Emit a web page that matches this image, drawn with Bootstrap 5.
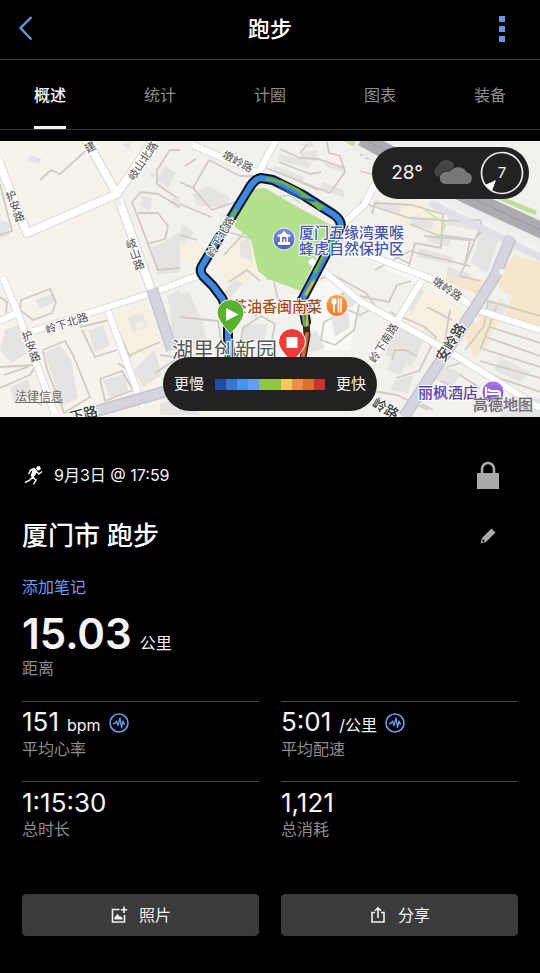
<!DOCTYPE html>
<html lang="zh-CN" data-bs-theme="dark">
<head>
<meta charset="utf-8">
<meta name="viewport" content="width=device-width, initial-scale=1">
<title>跑步</title>
<link rel="stylesheet" href="https://cdn.jsdelivr.net/npm/bootstrap@5.3.0/dist/css/bootstrap.min.css">
<style>
  body { background: #000; color: #f4f4f4; font-family: Inter, "Noto Sans CJK SC", sans-serif; font-size: 16px; line-height: 20px; }
  svg { display: block; }
  .icon-btn { background: none; border: 0; padding: 0; display: flex; align-items: center; justify-content: center; }
  .topbar { height: 60px; border-bottom: 1px solid #3a3a3a; display: grid; grid-template-columns: 52px 1fr 52px; padding: 0 12px 2px; }
  .topbar .icon-btn { height: 40px; }
  .topbar h1 { font-size: 22px; line-height: 28px; font-weight: 500; }
  .tabs { padding: 0 34px; border-bottom: 1px solid #3a3a3a; margin-bottom: 11px; }
  .tabs a { color: #8e8e8e; text-decoration: none; line-height: 20px; padding: 25px 0 21px; border-bottom: 3px solid transparent; }
  .tabs a.active { color: #fff; font-weight: 500; border-color: #f4f4f4; }
  .map-text { font-family: "Noto Sans CJK SC", sans-serif; }
  .vert { writing-mode: vertical-rl; }
  .legal { position: absolute; left: 15px; bottom: 12px; font-size: 12px; line-height: 16px; color: #6d6d6d; }
  .legend { position: absolute; left: 50%; bottom: 6px; transform: translateX(-50%); border-radius: 27px; padding: 17px 11px; gap: 11px; background: #222; font-size: 15px; white-space: nowrap; }
  .scale { display: flex; width: 110px; height: 11px; }
  .scale i { flex: 1; }
  .weather { position: absolute; right: 11px; top: 6px; height: 52px; border-radius: 26px; background: #222; padding: 0 4px 0 19px; font-size: 19px; }
  .content { padding: 38px 22px 37px; }
  .date-row, .title-row { min-height: 40px; }
  .title-row { margin: 21px 0 19px; }
  .title-row h2 { font-size: 26px; line-height: 34px; font-weight: 500; }
  .icon-btn.wide { width: 60px; height: 40px; }
  .note { color: #6c9df0; text-decoration: none; line-height: 24px; }
  .distance { margin: 11px 0 23px; }
  .distance b { font-size: 42px; line-height: 48px; font-weight: 600; }
  .caption { color: #8e8e8e; }
  .stats { display: grid; grid-template-columns: 1fr 1fr; column-gap: 22px; }
  .stat { border-top: 1px solid #454545; padding: 5px 0 22px; }
  .stat .value { height: 32px; line-height: 32px; display: flex; align-items: center; }
  .stat .value b { font-size: 26px; font-weight: 400; }
  .actions { display: grid; grid-template-columns: 1fr 1fr; gap: 22px; margin-top: 33px; }
  .actions .btn { --bs-btn-bg: #3b3b3b; --bs-btn-border-color: #3b3b3b; --bs-btn-color: #f0f0f0; border-radius: 4px; height: 42px; padding: 0; gap: 11px; font-size: 16px; line-height: 20px; }
</style>
</head>
<body>
<header class="topbar align-items-center">
  <button class="icon-btn justify-content-start ps-1" aria-label="返回">
    <svg width="20" height="28" viewBox="0 0 20 28"><path d="M15.500 2 4.500 13 15.500 24.500" fill="none" stroke="#6898dc" stroke-width="2.400"/></svg>
  </button>
  <h1 class="m-0 text-center">跑步</h1>
  <button class="icon-btn" aria-label="更多">
    <svg width="6" height="28" viewBox="0 0 6 28" fill="#6898dc"><path d="M0 1h6v6H0zM0 11h6v6H0zM0 21h6v6H0z"/></svg>
  </button>
</header>
<nav class="tabs d-flex justify-content-between" aria-label="活动">
  <a class="active" href="#" aria-current="page">概述</a>
  <a href="#">统计</a>
  <a href="#">计圈</a>
  <a href="#">图表</a>
  <a href="#">装备</a>
</nav>
<section class="position-relative" aria-label="地图">
  <svg class="w-100 h-auto map-text" viewBox="0 141 540 276">
    <defs>
      <linearGradient id="gBlue" x2="0" y2="1"><stop stop-color="#8093dc"/><stop offset="1" stop-color="#4b5db6"/></linearGradient>
      <linearGradient id="gOrange" x2="0" y2="1"><stop stop-color="#f7a45a"/><stop offset="1" stop-color="#e7792b"/></linearGradient>
      <linearGradient id="gPurple" x2="0" y2="1"><stop stop-color="#a87be6"/><stop offset="1" stop-color="#7a4bc8"/></linearGradient>
    </defs>
    <path fill="#f5f3ec" d="M0 141h540v276H0z"/>
    <path fill="#f2f1ee" d="M155 141H540V417H170L146 280 120 196z"/>
    <!-- tinted districts -->
    <g fill="#f6e6cb">
      <path d="M497 278 514 255 540 262V330L505 317 512 296 501 290zM465 337 475 320 492 327 488 345 474 358zM440 278 455 285 480 295 484 281 461 272zM474 318 482 311 500 298 508 306 492 333z"/>
    </g>
    <g fill="#f5f0df"><path d="M400 190 445 213 441 240 390 222zM418 287 465 310 450 348 402 321zM116 314 148 303 162 350 130 360zM188 240 206 250 196 268 178 255zM240 232 255 245 262 275 230 290 215 265z"/></g>
    <g fill="#f8f8f6"><path d="M345 225 430 275 420 285 335 244zM290 296 330 280 360 300 350 350 312 350z"/></g>
    <!-- buildings -->
    <g fill="#e5e4e3">
      <path d="M30 155 42 159 39 164 28 161zM122 145 132 141 129 149zM165 165 176 173 168 188 158 180zM150 172 155 174 153 178 149 176zM142 196 152 198 150 210 140 206zM168 201 180 196V210zM0 220 9 223V236L0 238zM162 243 180 232V272L157 275 151 247zM35 300 52 294 55 302 40 309zM5 330 20 325 26 354 12 363 0 350zM45 353 60 345 71 360 78 398 62 406zM88 331 103 325 110 345 95 353zM10 387 28 379 32 396 14 402zM103 380 125 374 128 392 110 397zM128 318 143 313 147 327 133 332zM133 370 155 350 162 375 143 387zM167 296 180 290V325L177 333z"/>
      <path d="M193 194 207 186 230 197 226 208 196 205zM230 164 240 154 230 150zM280 154 312 162 308 168 277 160zM275 166 305 177 302 183 273 172zM300 153 318 150 315 162 302 157zM325 160 346 168 345 173 325 166zM322 182 345 191 343 197 320 189zM181 224 194 232 184 245 180 240zM240 242 250 237 252 262 240 255zM235 280 243 283 230 298 224 292zM300 145 313 141 312 147z"/>
      <path d="M375 200 401 207 399 214 376 206zM412 215 434 223 431 230 411 224zM448 216 477 223 474 230 447 225zM429 235 451 239 448 247 428 242zM419 248 453 257 451 264 417 257zM482 228 500 236 487 273 471 263zM448 267 470 274 466 282 446 275zM372 240 382 247 376 254 368 250zM392 322 425 338 412 366 386 355zM398 350 410 358 400 375 386 370zM440 365 462 373 451 388 432 377zM500 357 530 372 520 382 494 370zM490 300 508 304 500 318 486 313z"/>
      <path d="M330 297 350 290 360 298 352 307 335 307zM332 320 348 312 350 327 335 337zM305 338 316 330 325 348 310 352zM170 300 188 291 202 320 208 345 172 350zM243 325 268 324 264 341 240 340zM180 357 204 363 200 374 178 370zM395 380 413 375 408 393 390 390zM505 402 540 398V417H500zM160 404 180 396 200 415H160zM412 288 425 290 410 315z"/>
    </g>
    <path d="M135 324 142 320 145 326 137 330z" fill="#f5f0df"/>
    <!-- lanes and block outlines -->
    <g fill="none" stroke="#cfccc7" stroke-width="1.800" stroke-linejoin="round">
      <path d="M40 180 51 170 60 174 90 147M0 184 12 231 0 235M180 150 170 150 157 170 157 184 177 198M132 202 141 192 158 194 180 207M132 202 158 270 180 268M138 213 158 213 168 226 165 239 147 244M21 300 50 289 56 302 52 313 33 320 20 310zM43 350 65 341 73 355 90 397 64 413 47 369 43 350M80 327 110 320M82 330 95 357 117 350M100 379 122 371 133 390 105 401 100 379M130 355 160 342M110 313 130 357M118 363 130 372M0 297 7 302 6 313M0 367 36 365 30 375 0 388M28 398 42 405M155 373 175 360M4 375 28 367"/>
      <path d="M193 188 209 160M193 188 212 210 235 202M209 160 240 176 257 176M180 204 211 217M197 240 180 235M180 280 198 272M218 229 255 240 268 280M224 255 246 231M180 317 218 321 222 345M229 282 247 270 260 281M240 344 243 328 261 316 275 324 270 350M276 141 260 174M266 168 330 193 345 172 340 156 329 153 327 142M280 149 300 158 318 159 345 168M300 153 307 145M279 162 310 174 321 172M300 182 318 190M185 166 196 159M180 182 195 189"/>
      <path d="M365 158 379 160 374 175 360 171M360 202 409 218 441 220M372 214 375 203 412 205 443 214 441 248 415 243 408 270M410 224 442 237M440 221 480 220 483 229 475 240 440 235M483 229 506 238M480 228 460 276 480 281M424 236 470 240M375 270 410 251 470 266M374 256 432 283M470 241 464 268M410 264 390 254M382 141 372 155 360 155"/>
      <path d="M320 279 333 275 366 293 376 307 360 315 348 310M336 300 345 292 360 300 354 330 335 345 321 340 324 322 336 316zM360 296 389 302 397 285 411 281M390 312 423 326 436 337 419 371 396 378M392 360 395 350 405 350 417 356M360 389 397 395 428 410M465 350 484 326 488 301 540 316M490 327 540 343M486 337 540 356M483 349 540 367M480 361 540 378M497 306 480 350M447 367 467 361 499 378 540 392M441 381 480 400M460 375 480 388M417 385 439 399M421 404 433 410M427 307 452 320M450 310 445 340"/>
      <path d="M160 355 182 358 200 355 208 371M165 388 200 399M253 300 300 315M265 302 255 316M274 282 278 300"/>
    </g>
    <!-- park -->
    <path fill="#b3e08c" d="M249 189 265 188 294 205 320 219 333 226 328 238 313 265 301 291 268 279 258 271 251 239 234 226z"/>
    <path d="M253 194 270 198 290 195 300 203" fill="none" stroke="#c5d8a5" stroke-width="1.500"/>
    <!-- streets -->
    <g fill="none" stroke="#dfdcd8" stroke-width="10" stroke-linejoin="round">
      <path d="M-2 160 27 233 117 194M85 138 117 194 155 138M119 200 152 292"/>
      <path stroke-width="8" d="M3 278 17 311 55 414M33 331 152 293 200 275M108 311 143 407M193 145 258 173M277 138 258 174M330 240 437 281 477 310 540 330M310 260 360 301 450 352 540 408M421 282 397 321 370 365M0 321 17 313M342 225 364 205 385 165"/>
    </g>
    <g fill="none" stroke="#fff" stroke-width="7.500" stroke-linejoin="round">
      <path d="M-2 160 27 233 117 194M85 138 117 194 155 138M119 200 152 292"/>
      <path stroke-width="6" d="M3 278 17 311 55 414M33 331 152 293 200 275M108 311 143 407M193 145 258 173M277 138 258 174M258 175 201 270M330 240 437 281 477 310 540 330M310 260 360 301 450 352 540 408M421 282 397 321 370 365M0 321 17 313M342 225 364 205 385 165"/>
    </g>
    <!-- avenues -->
    <g fill="none">
      <path d="M343 138 380 158M496 197 536 213" stroke="#bfe09b" stroke-width="5"/>
      <path d="M358 138 462 197 545 234" stroke="#eeedee" stroke-width="25"/>
      <path d="M362 138 465 195 545 232" stroke="#acacb0" stroke-width="16"/>
      <path d="M362 138 465 195 545 232" stroke="#97979c" stroke-width="1"/>
      <path d="M430 203 495 235 545 260" stroke="#e0e0e6" stroke-width="7"/>
      <path d="M425 210 446 225 440 235" stroke="#c5e3a1" stroke-width="1.500"/>
      <path d="M511 238 494 278 469 317 404 417M152 289 172 350M97 411 167 391 200 381" stroke="#c4c5cd" stroke-width="12"/>
      <path d="M511 236 494 278 469 317 404 417M152 289 172 350M97 411 167 391 200 381" stroke="#d5d6dd" stroke-width="9"/>
    </g>
    <g fill="#f0f0f0"><circle cx="516" cy="234" r="2"/><circle cx="502" cy="272" r="3"/><circle cx="477" cy="320" r="3"/><circle cx="119" cy="203" r="3"/></g>
    <!-- recorded route -->
    <g fill="none" stroke-linejoin="round" stroke-linecap="round">
      <path stroke="#071526" stroke-width="10" d="M232 360 228 341 228 312 222 298 213 286 203 276Q199 271 202 266L237 208 248 190Q254 179 261 178L273 180 303 195 333 214Q343 221 340 228L313 279 302 300 306 322"/>
      <path stroke="#3b2a1c" stroke-width="7" d="M306 322 307 335 303 358"/>
      <path stroke="#3f86df" stroke-width="6" d="M232 360 228 341 228 312 222 298 213 286 203 276Q199 271 202 266L237 208 248 190Q254 179 261 178L273 180 303 195 333 214Q343 221 340 228L313 279 302 300 306 324"/>
      <path stroke="#71b13f" stroke-width="3" d="M231 219 236 210M267 179 282 182 298 190 320 209M302 197 323 207M337 231 324 254 315 272M314 280 306 295M301 304 305 325"/>
      <path stroke="#2455a5" stroke-width="2" d="M280 187 300 198 314 201M320 254 333 233M302 299 307 324"/>
      <path stroke="#d2b545" stroke-width="2.500" d="M313 282 306 294M307 314V325"/>
      <path stroke="#d46c32" stroke-width="4" d="M307 334 303 356"/>
    </g>
    <!-- street names -->
    <g font-size="11" fill="#4c4b49" stroke="#fff" stroke-width="2" paint-order="stroke" text-anchor="middle">
      <text class="vert" transform="translate(15 206) rotate(-20)">护安路</text>
      <text class="vert" transform="translate(90 147) rotate(-30)">建</text>
      <text transform="translate(146 163) rotate(-56)">岐山北路</text>
      <text class="vert" transform="translate(135 254) rotate(-20)">岐山路</text>
      <text transform="translate(236 165) rotate(28)">墩岭路</text>
      <text transform="translate(224 239) rotate(-61)">岭下北路</text>
      <text transform="translate(68 327) rotate(-18)">岭下北路</text>
      <text class="vert" transform="translate(31 346) rotate(-20)">护安路</text>
      <text transform="translate(445 292) rotate(34)">墩岭路</text>
      <text transform="translate(387 345) rotate(-58)">岭下南路</text>
      <g font-size="14" font-weight="500" fill="#393938">
        <text transform="translate(455 345) rotate(-58)">安岭路</text>
        <text transform="translate(85 419) rotate(-15)">下路</text>
        <text transform="translate(383 413) rotate(30)">岭路</text>
      </g>
    </g>
    <!-- places -->
    <g stroke="#fff" stroke-width="2" paint-order="stroke" font-size="15" font-weight="500">
      <g fill="#4656b0"><text x="299" y="238">厦门五缘湾栗喉</text><text x="299" y="254">蜂虎自然保护区</text></g>
      <text x="232" y="312" fill="#a54a28">茶油香闽南菜</text>
      <text x="418" y="398" fill="#6040ab">丽枫酒店</text>
      <text x="172" y="357" font-size="21" font-weight="400" fill="#565656">湖里创新园</text>
    </g>
    <circle cx="284" cy="239" r="11" fill="url(#gBlue)" stroke="#f4f5fa"/>
    <path fill="#fff" d="M284 231 287 234 291 235 289 237H288V242H290V245H278V242H280V237H279L277 235 281 234zM282 237V242H283.500V239H285V242H286.500V237z"/>
    <circle cx="337" cy="305.500" r="11" fill="url(#gOrange)" stroke="#fff4e8"/>
    <path d="M334 301V312M338.500 299V312M341 299V312" fill="none" stroke="#fff" stroke-width="1.600" stroke-linecap="round"/><ellipse cx="334" cy="301.500" rx="2.500" ry="3.200" fill="#fff"/>
    <circle cx="493" cy="392" r="11" fill="url(#gPurple)" stroke="#f6f0ff"/>
    <path d="M486 387V397M486 394H500V397M490 391H497Q500 391 500 394" fill="none" stroke="#fff" stroke-width="2"/><circle cx="489" cy="390" r="1.500" fill="#fff"/>
    <text x="473" y="410" font-size="15" font-weight="500" fill="#6d6b70" stroke="#dededf" stroke-width="1" paint-order="stroke">高德地图</text>
    <!-- start and finish pins -->
    <path d="M230.500 334Q217 320 217 313A13.500 13.500 0 1 1 244 313Q244 320 230.500 334Z" fill="#59b12d" stroke="#fff"/>
    <path d="M226 308V321L238.500 314.500z" fill="#fff"/>
    <path d="M292 362Q278.500 349 278.500 342A13.500 13.500 0 1 1 305.500 342Q305.500 349 292 362Z" fill="#e83d38" stroke="#fff"/>
    <path d="M286.500 337h11v11h-11z" fill="#fff"/>
  </svg>
  <a class="legal" href="#">法律信息</a>
  <div class="weather d-flex align-items-center">
    <span>28°</span>
    <svg class="ms-2" width="44" height="26" viewBox="0 0 44 26">
      <path fill="#454545" d="M7 17A6 6 0 0 1 7 6 9 9 0 0 1 23 4V17z"/>
      <path fill="#777" d="M15 24.500A6.500 6.500 0 0 1 14.500 11.500 7 7 0 0 1 19 11 10 10 0 0 1 36 12 6.500 6.500 0 0 1 37 24.500z" stroke="#222"/>
    </svg>
    <svg class="ms-1" width="46" height="46" viewBox="0 0 46 46">
      <circle cx="23" cy="23" r="20.500" fill="none" stroke="#eee" stroke-width="1.700"/>
      <path d="M6 35 17 30 13 41z" fill="#fff"/>
      <text x="23" y="28" text-anchor="middle" font-size="15" fill="#f4f4f4">7</text>
    </svg>
  </div>
  <div class="legend d-flex align-items-center">
    <span>更慢</span>
    <div class="scale">
      <i style="background:#204da3"></i><i style="background:#3875cf"></i><i style="background:#4d91ef"></i><i style="background:#609ffa"></i><i style="background:#8fc73e"></i><i style="background:#8fc73e"></i><i style="background:#f3c85f"></i><i style="background:#ec9141"></i><i style="background:#dd6f2a"></i><i style="background:#c6352d"></i>
    </div>
    <span>更快</span>
  </div>
</section>
<main class="content">
  <div class="date-row d-flex align-items-center">
    <svg width="24" height="20" viewBox="0 0 24 20">
      <circle cx="16.500" cy="3.200" r="2.200" fill="#fff"/>
      <path d="M8 5.500 12 3.500 14.500 6.500 10.500 12 14 15 11.500 19.500M10.500 12 8 15 3 17.500M14.500 6.500 17 9 20 6.500M8.500 5.500 6.500 9" fill="none" stroke="#fff" stroke-width="1.500"/>
      <path d="M11 3.500 15 6 13.500 9.500 11.500 12.500 8.500 11z" fill="#fff"/>
    </svg>
    <time class="flex-grow-1 ms-2" datetime="09-03T17:59">9月3日 @ 17:59</time>
    <button class="icon-btn wide" aria-label="隐私">
      <svg width="22" height="28" viewBox="0 0 22 28"><path d="M5 13V8a6 6 0 0 1 12 0v5" fill="none" stroke="#a9a9a9" stroke-width="2.600"/><path d="M0 12h22v16H0z" fill="#a9a9a9"/></svg>
    </button>
  </div>
  <div class="title-row d-flex align-items-center justify-content-between">
    <h2 class="m-0">厦门市 跑步</h2>
    <button class="icon-btn wide" aria-label="编辑名称">
      <svg width="16" height="16" viewBox="0 0 16 16"><path d="M.5 15.500 2 10 11.500.500 15.500 4.500 6 14z" fill="#a9a9a9"/><path d="M2.500 11.500Q5 11 4.500 13.500L2.500 14z" fill="#000"/></svg>
    </button>
  </div>
  <a class="note d-block" href="#">添加笔记</a>
  <div class="distance">
    <div class="d-flex align-items-baseline gap-2"><b>15.03</b><span>公里</span></div>
    <div class="caption">距离</div>
  </div>
  <div class="stats">
    <div class="stat">
      <div class="value"><div><b>151</b><span class="ms-2">bpm</span></div>
        <button class="icon-btn ms-2" aria-label="心率图表"><svg width="20" height="20" viewBox="0 0 20 20" fill="none" stroke="#6c9df0"><circle cx="10" cy="10" r="9" stroke-width="1.600"/><path d="M4 10.500H6L7.500 8 9 12.500 11 5 12.500 14.500 14 8 15 11H16" stroke-width="1.300" stroke-linejoin="round"/></svg></button>
      </div>
      <div class="caption">平均心率</div>
    </div>
    <div class="stat">
      <div class="value"><div><b>5:01</b><span class="ms-2">/公里</span></div>
        <button class="icon-btn ms-2" aria-label="配速图表"><svg width="20" height="20" viewBox="0 0 20 20" fill="none" stroke="#6c9df0"><circle cx="10" cy="10" r="9" stroke-width="1.600"/><path d="M4 10.500H6L7.500 8 9 12.500 11 5 12.500 14.500 14 8 15 11H16" stroke-width="1.300" stroke-linejoin="round"/></svg></button>
      </div>
      <div class="caption">平均配速</div>
    </div>
    <div class="stat"><div class="value"><b>1:15:30</b></div><div class="caption">总时长</div></div>
    <div class="stat"><div class="value"><b>1,121</b></div><div class="caption">总消耗</div></div>
  </div>
  <div class="actions">
    <button class="btn d-flex align-items-center justify-content-center">
      <svg width="18" height="18" viewBox="0 0 18 18"><path d="M9.500 3.500H2.500V16H14.500V9" fill="none" stroke="#f0f0f0" stroke-width="1.600"/><path d="M14 .500V7M10.800 3.700H17.200" stroke="#f0f0f0" stroke-width="1.600"/><path d="M4.500 13.500V11.500L7.500 8 9.500 10.500H11L12.500 12V13.500z" fill="#f0f0f0"/></svg>
      照片
    </button>
    <button class="btn d-flex align-items-center justify-content-center">
      <svg width="18" height="18" viewBox="0 0 18 18" fill="none" stroke="#f0f0f0" stroke-width="1.600"><path d="M6 6.500H3V16H15V6.500H12M9 12V2M6 4.800 9 1.800 12 4.800"/></svg>
      分享
    </button>
  </div>
</main>
<script src="https://cdn.jsdelivr.net/npm/bootstrap@5.3.0/dist/js/bootstrap.bundle.min.js"></script>
</body>
</html>
